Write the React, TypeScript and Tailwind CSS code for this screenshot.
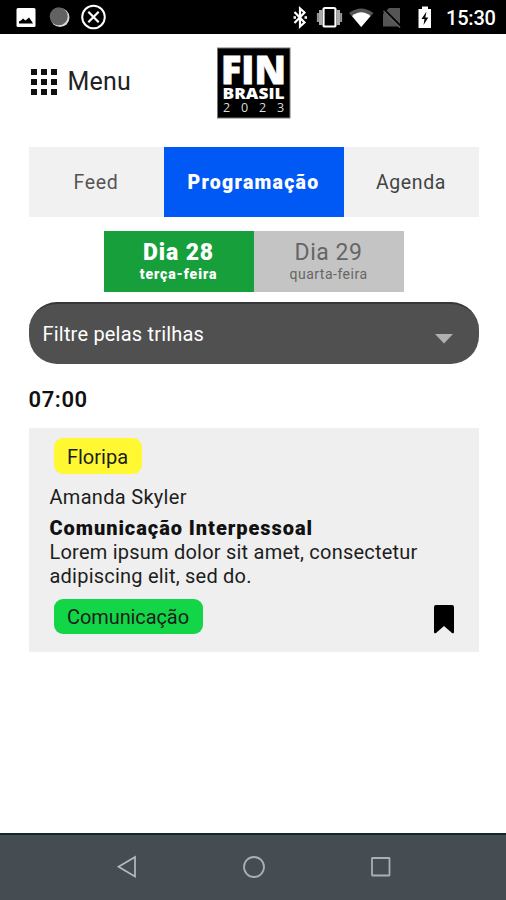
import { useState } from 'react'

const tabs = [
  { id: 'feed', label: 'Feed', size: 'w-[135px]', text: 'tracking-[0.7px]', color: 'text-[#555555]' },
  { id: 'programacao', label: 'Programação', size: 'w-[180px]', text: 'tracking-[1.25px]', color: 'text-[#333333]' },
  { id: 'agenda', label: 'Agenda', size: 'w-[135px]', text: 'tracking-[0.6px]', color: 'text-[#444444]' },
]

const days = [
  { id: 28, label: 'Dia 28', weekday: 'terça-feira' },
  { id: 29, label: 'Dia 29', weekday: 'quarta-feira' },
]

function StatusBar() {
  return (
    <header className="flex h-[34px] items-center justify-between bg-black pl-4 pr-[11px]">
      <svg width="90" height="34" viewBox="16 0 90 34">
        <rect x="16.5" y="8" width="19" height="19" rx="1.5" fill="#fff" />
        <path d="M19 23.500v-2l2-1 2-2 2.500 2 3.500-3 2.500 3.500 1.500 2.500z" fill="#000" />
        <circle cx="60" cy="17.5" r="9.5" fill="#d8d8d8" />
        <circle cx="58.7" cy="16.3" r="9" fill="#626262" />
        <circle cx="93.5" cy="17" r="11.3" fill="none" stroke="#fff" strokeWidth="2" />
        <path d="M88.3 11.8l10.4 10.4M98.7 11.8L88.3 22.2" stroke="#fff" strokeWidth="2.2" />
      </svg>
      <div className="flex items-center">
        <svg width="146" height="34" viewBox="290 0 146 34">
          <path d="M294.500 12l10 10.500-4.500 4V8.500l4.500 4-10 10.500" fill="none" stroke="#fff" strokeWidth="2.200" />
          <path d="M293.5 16.2h2.5v2.5h-2.5zM304.5 16.2h2.5v2.5h-2.5z" fill="#fff" />
          <rect x="323.5" y="8" width="12" height="18.5" rx="1.5" fill="none" stroke="#fff" strokeWidth="2.2" />
          <path d="M320.5 10v15M338.500 10v15" stroke="#aaa" strokeWidth="3" />
          <path d="M317.9 13v9M341.100 13v9" stroke="#999" strokeWidth="2" />
          <path d="M349 13Q361 4 373.500 13L361.200 27z" fill="#555" />
          <path d="M352 16Q361.200 8.500 370.500 16L361.200 27z" fill="#fff" />
          <path d="M389 8h11v18.500h-17V14z" fill="#555" />
          <path d="M382.500 8.500l18.500 18.500" stroke="#000" strokeWidth="3" />
          <path d="M383.500 11l16.500 16.500" stroke="#666" strokeWidth="1.500" />
          <path d="M422 6.500h6V9h3v19h-12.500V9h3.500z" fill="#fff" />
          <path d="M426.500 11.500l-5 7.500h3l-1 6 4.800-7.500h-3z" fill="#000" />
        </svg>
        <span className="ml-[10px] w-[49px] whitespace-nowrap pt-0.5 text-[20px] font-medium leading-none tracking-[-0.2px] text-white">15:30</span>
      </div>
    </header>
  )
}

function Logo() {
  return (
    <svg width="74" height="72" viewBox="0 0 74 72" className="ml-[85px]">
      <rect x="0.5" y="1" width="72.500" height="70" fill="#000" stroke="#777" />
      <g fill="#fff" fontFamily="'Open Sans', sans-serif">
        <text x="4" y="36.500" fontSize="39" fontWeight="800" stroke="#fff" strokeWidth="0.800" textLength="65" lengthAdjust="spacingAndGlyphs">FIN</text>
        <text x="5.500" y="52" fontSize="16" fontWeight="800" textLength="62" lengthAdjust="spacingAndGlyphs">BRASIL</text>
        <text x="6" y="64.500" fontSize="12.500" fill="#ddd">2</text>
        <text x="24" y="64.500" fontSize="12.500" fill="#ddd">0</text>
        <text x="42" y="64.500" fontSize="12.500" fill="#ddd">2</text>
        <text x="60" y="64.500" fontSize="12.500" fill="#ddd">3</text>
      </g>
    </svg>
  )
}

function NavigationBar() {
  return (
    <footer className="flex h-[67px] items-center justify-center gap-[104px] border-t-2 border-[#12292b] bg-[#454c52] pb-[2px] pl-px">
      <svg width="22" height="24" viewBox="0 0 22 24" fill="none" stroke="#b5babd" strokeWidth="1.7">
        <path d="M19 2v19.500L2.500 11.750z" />
      </svg>
      <svg width="24" height="24" viewBox="0 0 24 24" fill="none" stroke="#a9afb2" strokeWidth="1.800">
        <circle cx="12" cy="12" r="10" />
      </svg>
      <svg width="22" height="24" viewBox="0 0 22 24" fill="none" stroke="#a9afb2" strokeWidth="1.800">
        <rect x="2" y="3" width="17.500" height="17.500" rx="0.500" />
      </svg>
    </footer>
  )
}

export default function App() {
  const [activeTab, setActiveTab] = useState('programacao')
  const [activeDay, setActiveDay] = useState(28)

  return (
    <div className="flex h-[900px] w-[506px] flex-col overflow-hidden bg-white font-['Roboto',sans-serif]">
      <StatusBar />

      <main className="flex flex-1 flex-col px-[28.5px]">
        <div className="mt-[13px] flex items-center">
          <button className="flex w-[103px] items-center gap-[10px] pb-[2px]">
            <svg width="27" height="26" viewBox="0 0 27 26" className="ml-[2px] shrink-0">
              {[0, 10, 20].map((y) =>
                [0, 10, 20].map((x) => <rect key={`${x}-${y}`} x={x} y={y} width="6" height="6" fill="#111" />)
              )}
            </svg>
            <span className="text-[25px] leading-8 tracking-[0.2px] text-[#222222]">Menu</span>
          </button>
          <Logo />
        </div>

        <nav className="mt-[28px] flex h-[70px] w-[450px]">
          {tabs.map((tab) => (
            <button
              key={tab.id}
              onClick={() => setActiveTab(tab.id)}
              className={`${tab.size} ${tab.text} pt-0.5 text-[19.5px] ${
                activeTab === tab.id ? 'bg-[#0059f5] font-black text-white' : `bg-[#f1f1f1] ${tab.color}`
              }`}
            >
              {tab.label}
            </button>
          ))}
        </nav>

        <div className="ml-[75px] mt-[14px] flex h-[61px] w-[300px]">
          {days.map((day) => (
            <button
              key={day.id}
              onClick={() => setActiveDay(day.id)}
              className={`flex w-1/2 flex-col items-center pt-2 ${
                activeDay === day.id
                  ? 'bg-[#169f3a] font-black tracking-[0.9px] text-white'
                  : 'bg-[#c4c4c4] tracking-[0.5px] text-[#666666]'
              }`}
            >
              <span className="text-[23px] leading-[27px]">{day.label}</span>
              <span className="text-[14px] leading-[17px]">{day.weekday}</span>
            </button>
          ))}
        </div>

        <button className="mt-[10px] flex h-[62px] w-[450px] shrink-0 items-center justify-between rounded-[28px] border-t-2 border-[#373737] bg-[#505050] pl-[14px] pr-[26px]">
          <span className="text-[20px] tracking-[0.2px] text-white">Filtre pelas trilhas</span>
          <svg width="18" height="10" viewBox="0 0 18 10" className="mt-[10px]">
            <path d="M0 0h18L9 9.500z" fill="#b0b0b0" />
          </svg>
        </button>

        <h2 className="mt-[22px] text-[22px] font-semibold leading-[28px] tracking-[0.6px] text-[#111111]">07:00</h2>

        <article className="mt-[14px] h-[224px] w-[450px] bg-[#efefef] pl-[21px] pt-[10px] text-[20px] text-[#1d1d1d]">
          <span className="ml-1 flex h-9 w-[88px] items-center justify-center rounded-[9px] bg-[#fff833] pt-[2px]">Floripa</span>
          <p className="mt-[11px] leading-6 tracking-[0.3px]">Amanda Skyler</p>
          <h3 className="mt-[7px] font-black leading-6 tracking-[0.95px] text-[#111111]">Comunicação Interpessoal</h3>
          <p className="w-[400px] leading-6 tracking-[0.22px]">
            Lorem ipsum dolor sit amet, consectetur
            <br />
            adipiscing elit, sed do.
          </p>
          <div className="mt-[10px] flex items-center justify-between pr-[25px]">
            <span className="ml-1 flex h-[35px] w-[149px] items-center justify-center rounded-[9px] bg-[#12d647] pt-px tracking-[-0.1px]">Comunicação</span>
            <svg width="20" height="29" viewBox="0 0 20 29" className="mt-[7px]">
              <path d="M2 0h16q2 0 2 2v25q0 2-2 1l-8-7-8 7q-2 1-2-1V2q0-2 2-2z" fill="#000" />
            </svg>
          </div>
        </article>
      </main>

      <NavigationBar />
    </div>
  )
}
